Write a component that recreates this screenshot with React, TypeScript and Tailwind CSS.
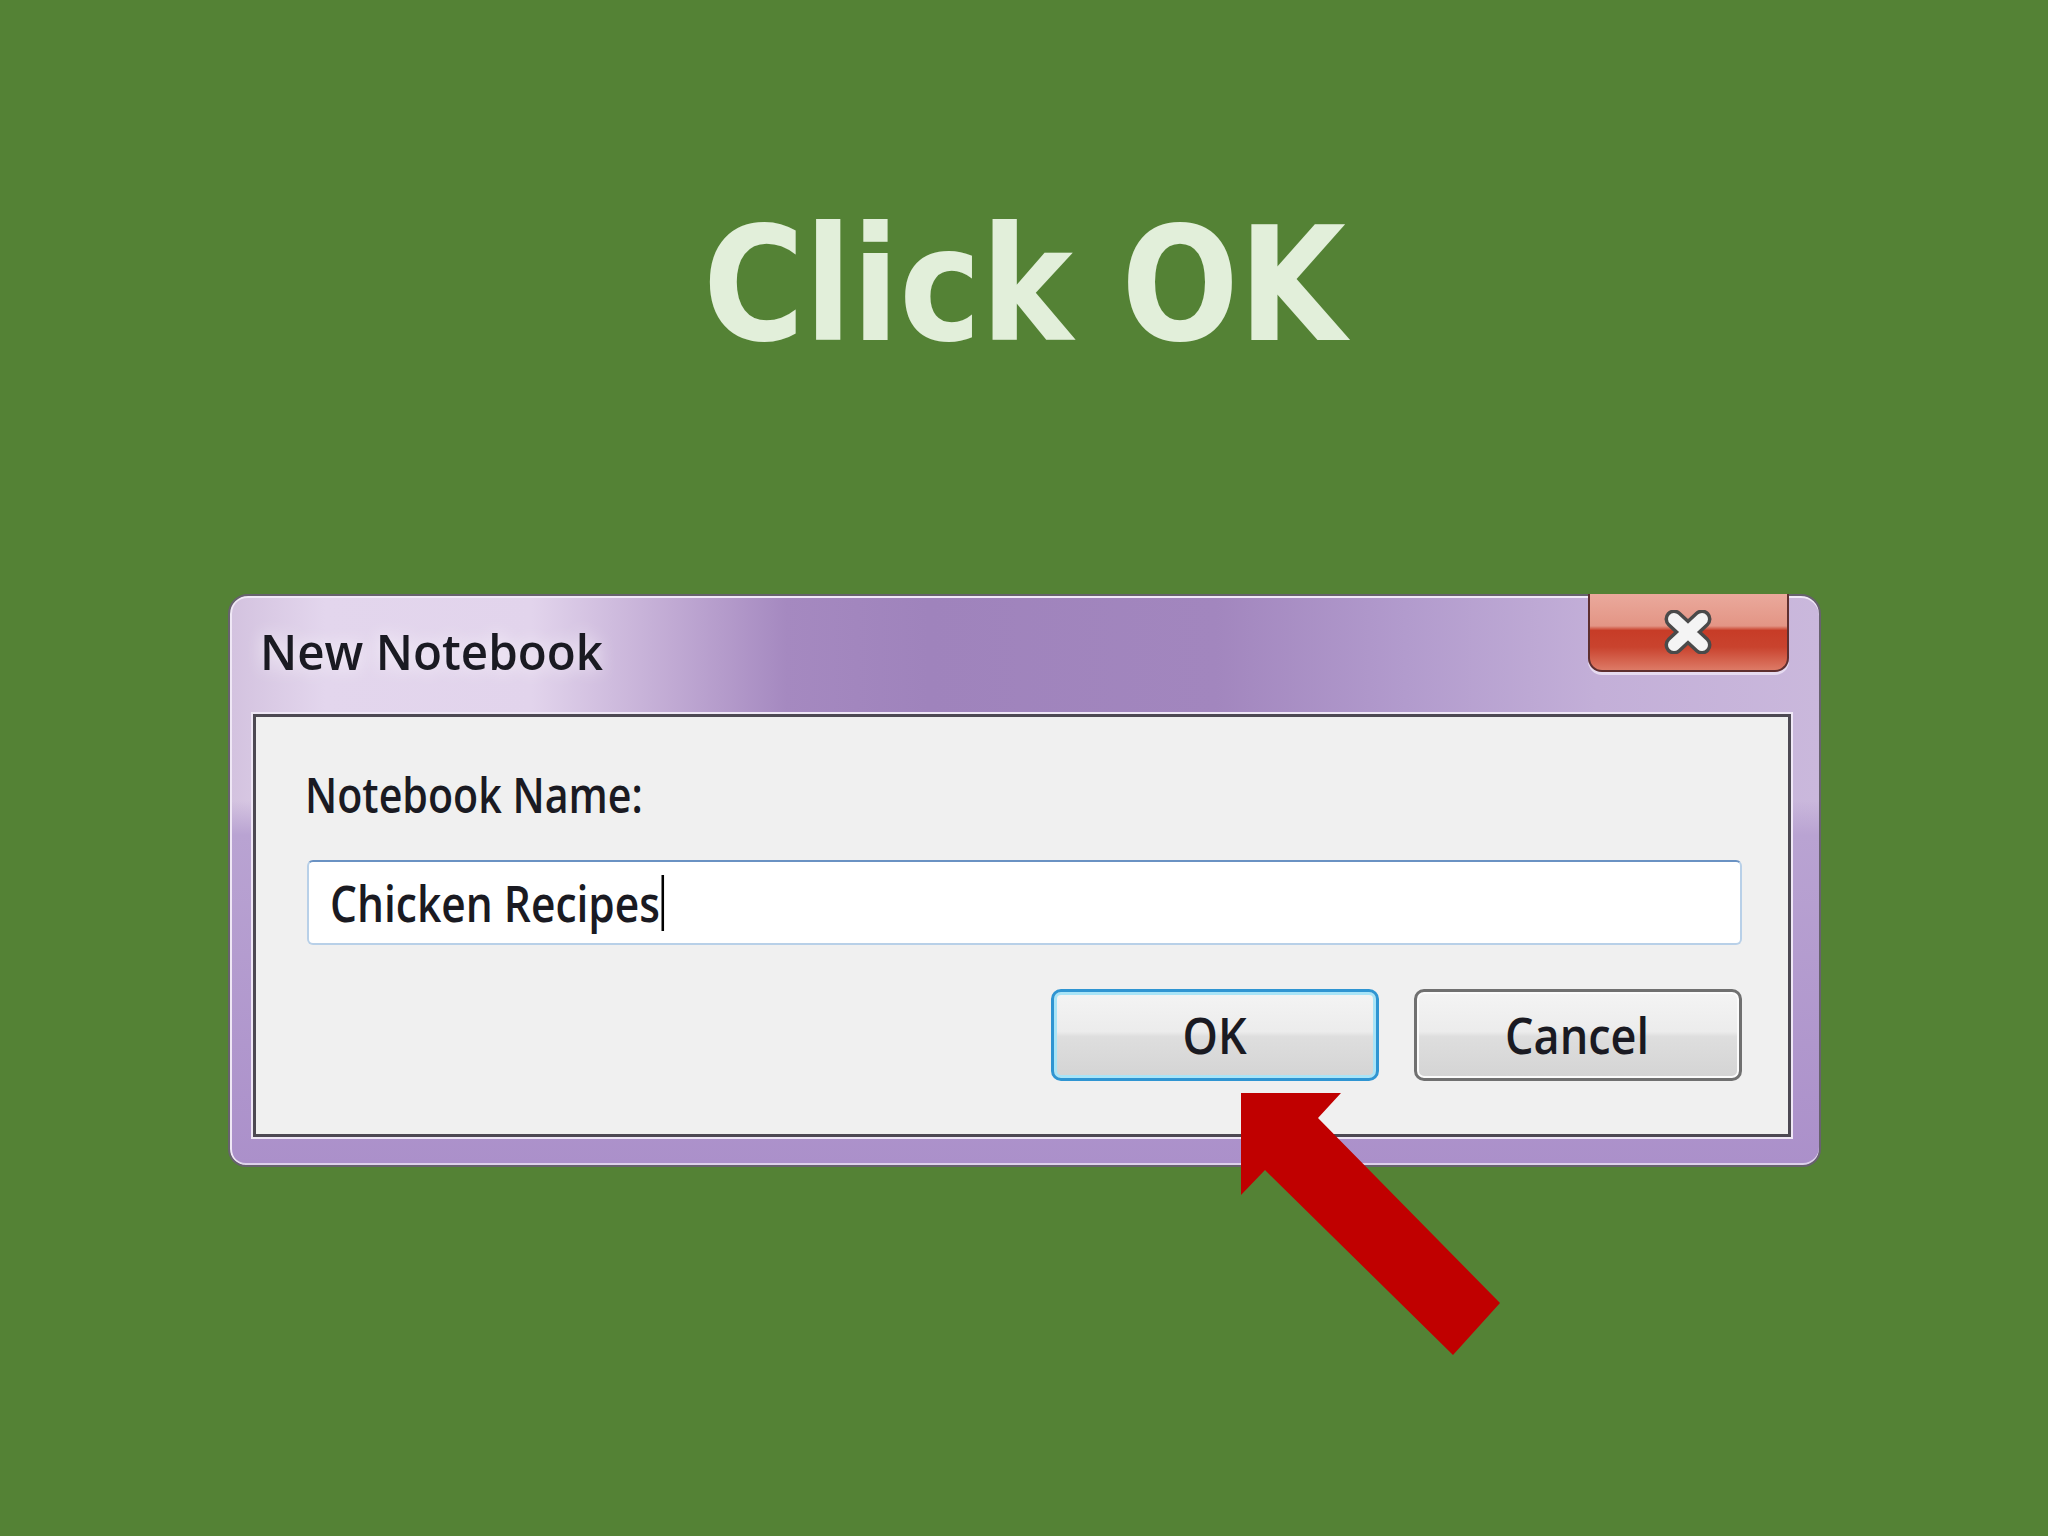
import React from "react";

// White "x" with a dark outline, as on the Aero close button
function CloseGlyph() {
  return (
    <svg width="50" height="44" viewBox="0 0 50 44">
      <path d="M11 9 L39 35 M39 9 L11 35" stroke="#4a4a4a" strokeWidth="19" strokeLinecap="round" fill="none" />
      <path d="M11 9 L39 35 M39 9 L11 35" stroke="#f4f4f4" strokeWidth="12" strokeLinecap="round" fill="none" />
    </svg>
  );
}

function Arrow() {
  return (
    <svg className="pointer-events-none absolute inset-0" width="2048" height="1536" viewBox="0 0 2048 1536">
      <polygon points="1241,1093 1341,1093 1318,1118 1500,1303 1453,1355 1265,1170 1241,1195" fill="#c00000" />
    </svg>
  );
}

function DialogButton({ label, primary }: { label: string; primary?: boolean }) {
  return (
    <div
      className={
        primary
          ? "flex h-[92px] w-[328px] items-center justify-center rounded-[10px] border-[3px] border-[#2f95d2] bg-[linear-gradient(to_bottom,#f4f4f4_0%,#ececec_46%,#dedede_52%,#d4d4d4_100%)] shadow-[inset_0_0_0_3px_#a9e4f7]"
          : "flex h-[92px] w-[328px] items-center justify-center rounded-[10px] border-[3px] border-[#707070] bg-[linear-gradient(to_bottom,#f4f4f4_0%,#ececec_46%,#dedede_52%,#d4d4d4_100%)] shadow-[inset_0_0_0_2px_#fbfbfb]"
      }
    >
      <span className="inline-block scale-x-[0.9] font-['Open_Sans',sans-serif] text-[50px] leading-[50px] font-semibold text-[#1a1a22]">
        {label}
      </span>
    </div>
  );
}

function NewNotebookDialog() {
  return (
    <div className="mt-[230px] flex h-[573px] w-[1593px] flex-col rounded-t-[20px] rounded-b-[18px] border-2 border-[#67626d] bg-[image:linear-gradient(to_bottom,rgba(183,161,209,0)_0%,rgba(183,161,209,0)_36%,#b9a3d2_42%,#ab90ca_100%),linear-gradient(to_right,#d3c2df_0%,#e3d6ed_6%,#e2d4ec_19%,#c0a9d3_28%,#a589c0_35%,#9f83bc_44%,#a286be_62%,#b29bcd_74%,#c3afd8_86%,#cab8dc_100%)] pr-[28px] pb-[28px] pl-[23px] shadow-[inset_0_2px_0_#f1e9f7,inset_2px_0_0_#efe7f5,inset_0_-2px_0_#ddd1ea]">
      {/* title bar */}
      <div className="flex h-[118px] items-start justify-between">
        <div className="mt-[31px] ml-[7px] font-['Open_Sans',sans-serif] text-[49px] leading-[49px] font-semibold text-[#1a1a22] [text-shadow:0_0_18px_rgba(255,255,255,0.8)]">
          <span className="inline-block origin-left scale-x-[0.97]">New Notebook</span>
        </div>
        <div className="-mt-[2px] mr-[2px] flex h-[78px] w-[201px] items-center justify-center rounded-b-[14px] border-2 border-t-0 border-[#5e2f2f] bg-[linear-gradient(to_bottom,#eaa99c_0%,#e39585_42%,#c73c27_48%,#c9432e_70%,#dd7a66_100%)] shadow-[0_3px_0_#e6dbf0]">
          <CloseGlyph />
        </div>
      </div>

      {/* client area */}
      <div className="flex flex-1 flex-col border-[3px] border-[#4d4953] bg-[#f0f0f0] pt-[53px] pr-[46px] pl-[49px] shadow-[0_0_0_2px_#efe7f6]">
        <div className="h-[49px] font-['Open_Sans',sans-serif] text-[49px] leading-[49px] font-semibold">
          <span className="inline-block origin-left scale-x-[0.84] text-[#1a1a22]">Notebook Name:</span>
        </div>

        <div className="mt-[41px] ml-[2px] flex h-[85px] items-center rounded-[6px] border-2 border-[#b8d0e8] border-t-[#6a92c3] bg-white pl-[21px]">
          <span className="inline-block origin-left scale-x-[0.85] font-['Open_Sans',sans-serif] text-[50px] leading-[50px] font-semibold text-[#1a1a22]">
            Chicken Recipes
            <span className="ml-[2px] inline-block h-[56px] w-[3px] bg-black align-[-9px]" />
          </span>
        </div>

        <div className="mt-[44px] flex justify-end gap-[35px]">
          <DialogButton label="OK" primary />
          <DialogButton label="Cancel" />
        </div>
      </div>
    </div>
  );
}

export default function App() {
  return (
    <div className="relative flex h-[1536px] w-full flex-col items-center overflow-hidden bg-[#548235]">
      <h1 className="mt-[206px] inline-block scale-x-[0.875] font-['DejaVu_Sans',sans-serif] text-[158px] leading-none font-bold text-[#e2efda]">
        Click OK
      </h1>
      <NewNotebookDialog />
      <Arrow />
    </div>
  );
}
